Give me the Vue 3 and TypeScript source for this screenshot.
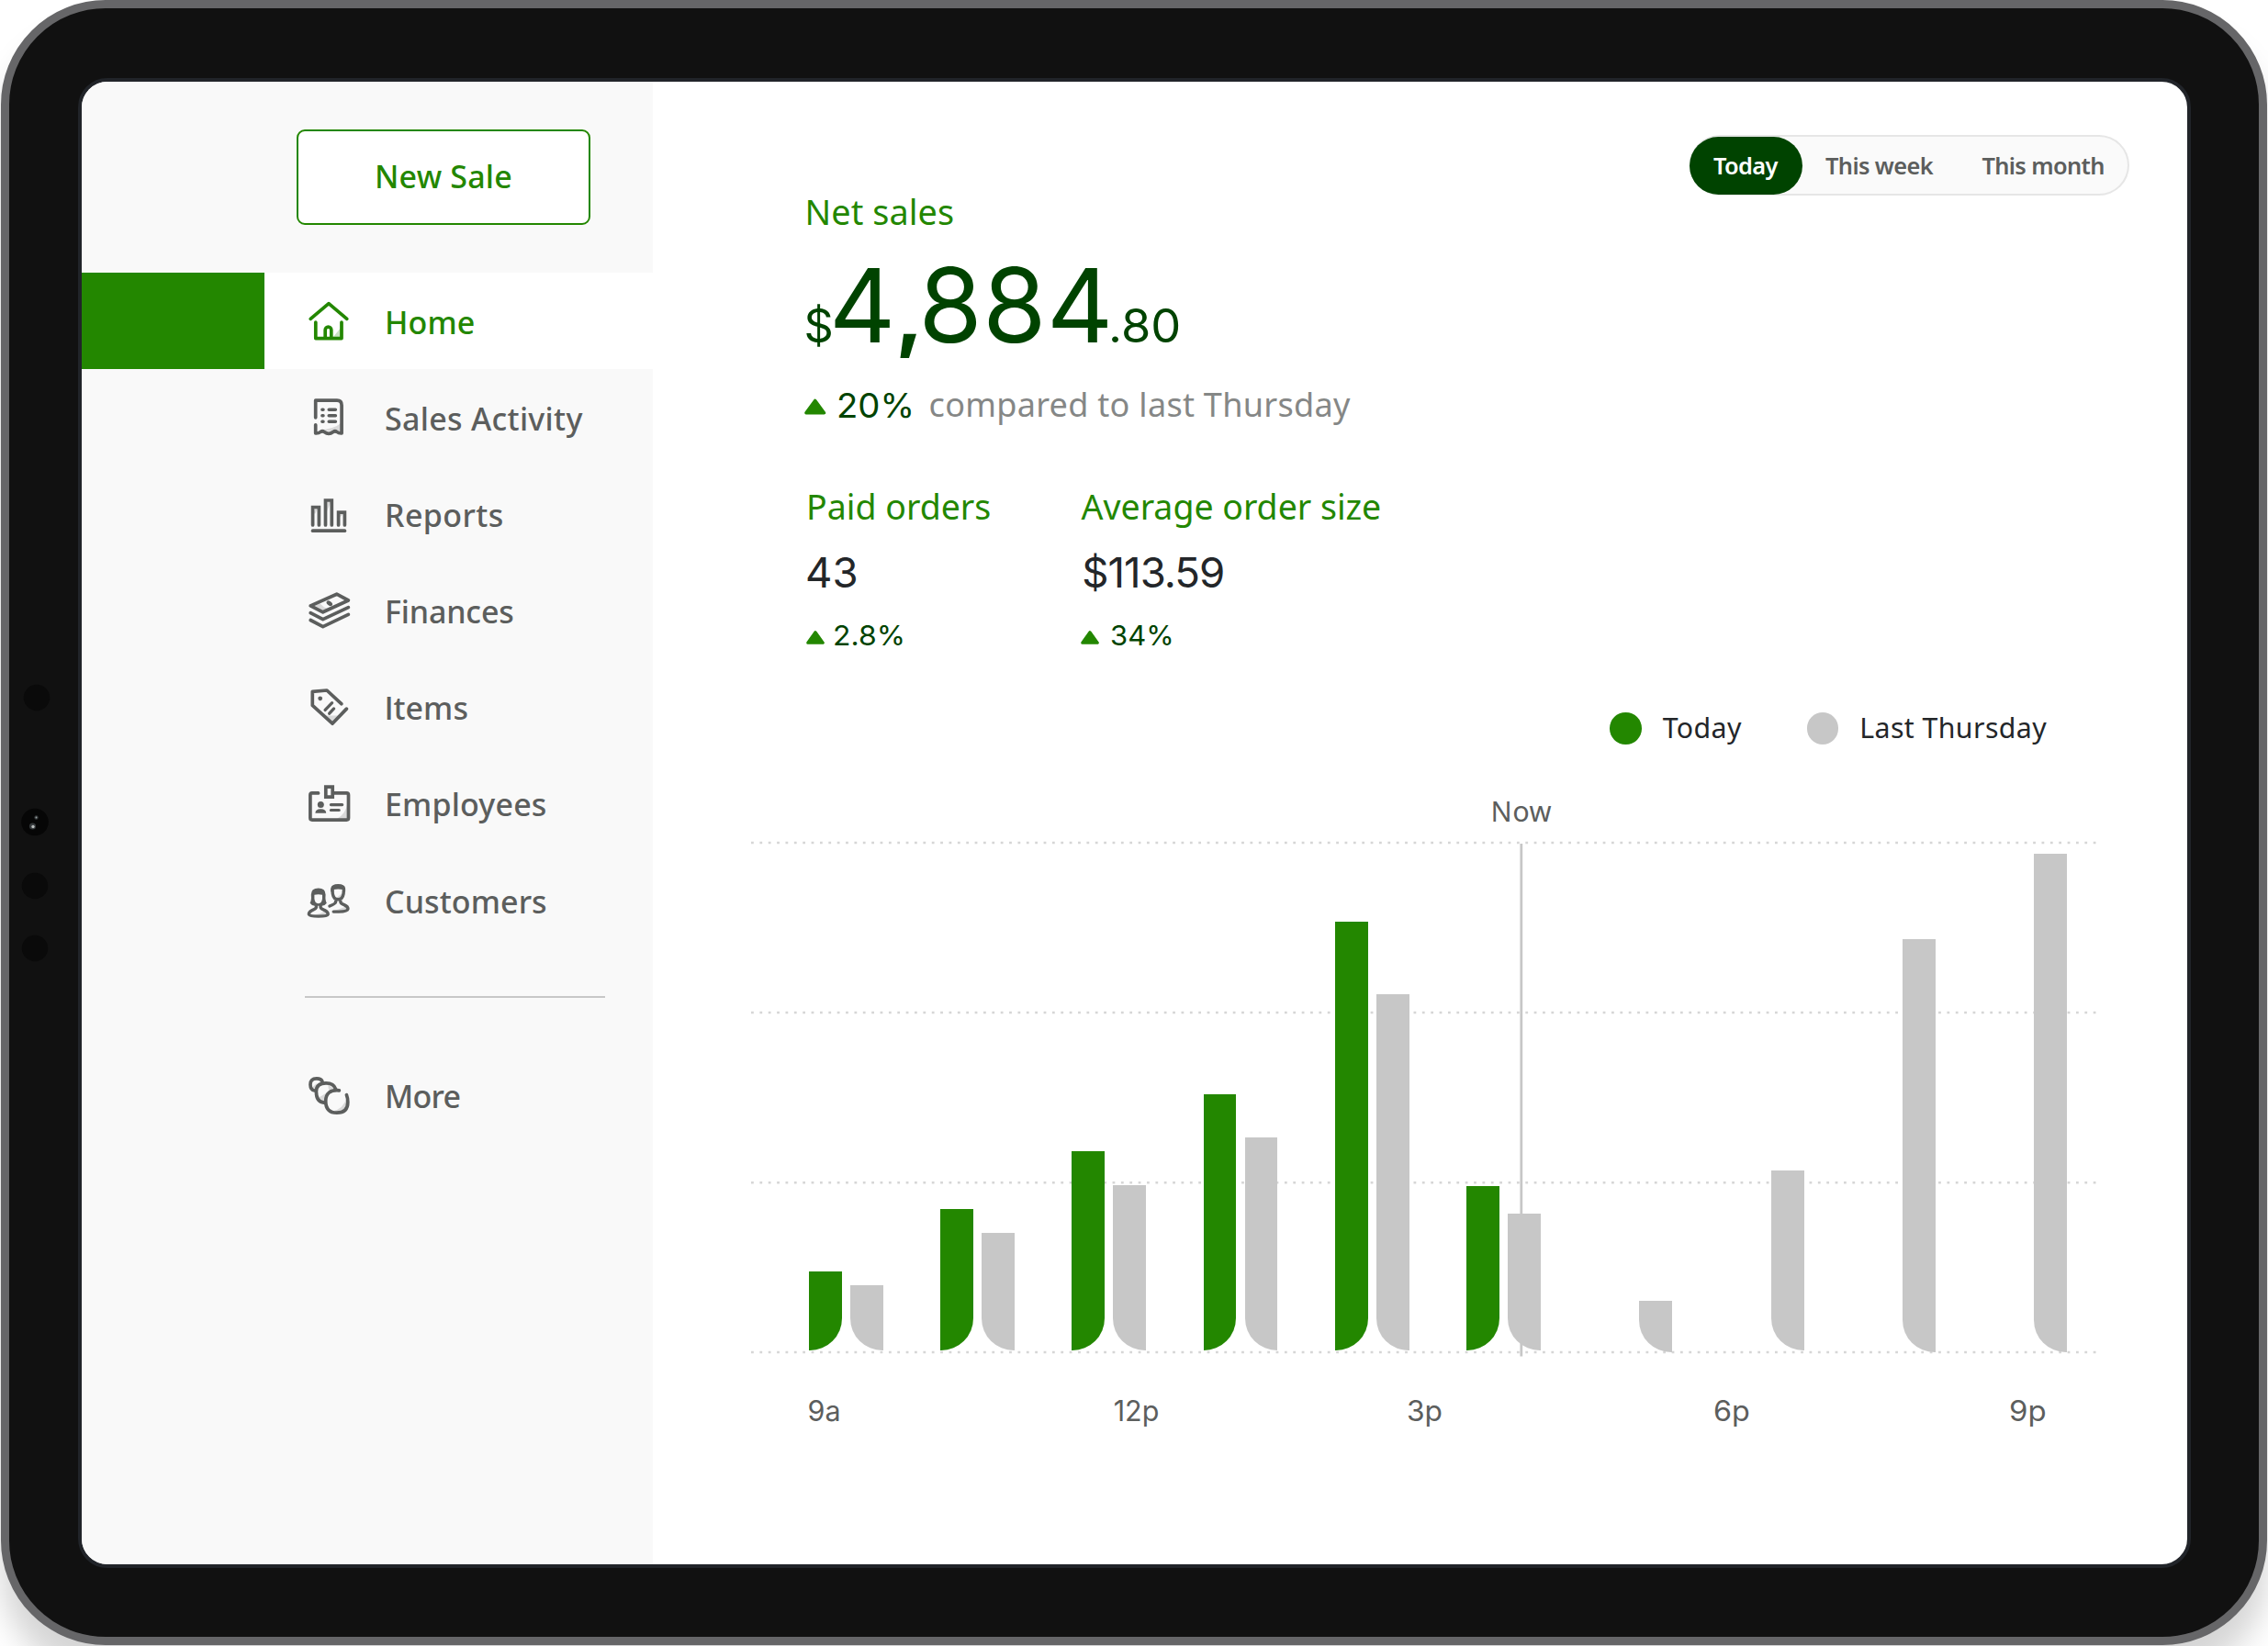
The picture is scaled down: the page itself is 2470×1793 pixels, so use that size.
<script setup lang="ts">
interface NavItem {
  id: string
  label: string
  tracking: number
}

interface Slot {
  today: number
  last: number
  drop?: number
}

const navItems: NavItem[] = [
  { id: 'home', label: 'Home', tracking: 0.1 },
  { id: 'sales', label: 'Sales Activity', tracking: 0.3 },
  { id: 'reports', label: 'Reports', tracking: 0.4 },
  { id: 'finances', label: 'Finances', tracking: -0.17 },
  { id: 'items', label: 'Items', tracking: 0.1 },
  { id: 'employees', label: 'Employees', tracking: 0.17 },
  { id: 'customers', label: 'Customers', tracking: 0.1 },
  { id: 'more', label: 'More', tracking: -0.7 },
]

const slots: Slot[] = [
  { today: 86, last: 71 },
  { today: 154.5, last: 128.5 },
  { today: 217.3, last: 180 },
  { today: 279.6, last: 232 },
  { today: 467.5, last: 388 },
  { today: 179.6, last: 149.3 },
  { today: 0, last: 56.3, drop: 2 },
  { today: 0, last: 196 },
  { today: 0, last: 450, drop: 2 },
  { today: 0, last: 543, drop: 2 },
]

const gridLines = [2, 187, 372.3, 557]

const hours = [
  { label: '9a', width: 333.2, stretch: 1 },
  { label: '12p', width: 319.1, stretch: 1 },
  { label: '3p', width: 334.1, stretch: 1.04 },
  { label: '6p', width: 321.8, stretch: 1.06 },
  { label: '9p', width: 80, stretch: 1.08 },
]
</script>

<template>
  <div class="page">
    <div class="device">
      <svg class="sensors" width="60" height="320" viewBox="0 0 60 320">
        <g fill="#0a0a0a">
          <circle cx="40" cy="20" r="14.2" />
          <circle cx="38" cy="155.5" r="14.8" fill="#060606" />
          <circle cx="38" cy="225" r="14.2" />
          <circle cx="38" cy="293" r="14.2" />
        </g>
        <circle cx="35.5" cy="160" r="3.6" fill="#34383a" />
        <circle cx="36" cy="160.5" r="1.7" fill="#b9bdbd" />
        <circle cx="39.5" cy="150.5" r="2.2" fill="#34383a" />
        <circle cx="39.5" cy="150.5" r="0.9" fill="#9aa3a3" />
      </svg>

      <div class="screen">
        <aside class="sidebar">
          <button class="new-sale">New Sale</button>
          <nav>
            <template v-for="item in navItems" :key="item.id">
              <hr v-if="item.id === 'more'" class="divider" />
              <a class="nav-item" :class="[item.id, { active: item.id === 'home' }]">
                <svg class="icon" width="60" height="60" viewBox="0 0 60 60" fill="none" stroke="currentColor"
                  stroke-width="3.7" stroke-linecap="round" stroke-linejoin="round">
                  <template v-if="item.id === 'home'">
                    <path class="shade" d="M34.5 47.5 44 36V47.5Z" />
                    <path d="M10.2 27.3 30 10.6 49.8 27.3" />
                    <path d="M15.8 31V48.6H44V31" />
                    <path d="M26.2 48V39.4A3.3 3.3 0 0 1 32.8 39.4V48" />
                  </template>
                  <template v-else-if="item.id === 'sales'">
                    <path class="shade" d="M19 43.5Q37 42 43 36V45.5Z" />
                    <path d="M15.7 29.8V11.2H39Q44.1 11.2 44.1 16.5V47Q41 47.2 38.8 45.4 36.8 44 34.8 45.6 30 49.2 25.2 45.6 23.2 44 21.2 45.4 19 47.2 15.7 47V37.8" />
                    <path stroke-width="3.5" d="M22.9 21.2H24M30.2 21.2H37.4M22.9 27.8H24M30.2 27.8H37.4M22.9 34.2H24M30.2 34.2H37.4" />
                  </template>
                  <template v-else-if="item.id === 'reports'">
                    <path class="shade" d="M13.5 28 15.5 23H18.5L15 30ZM28 27V16.5H32.5ZM41.5 34V29.5H46.5Z" />
                    <path stroke-linejoin="miter" d="M12.6 42V22.5H19.4V42M26.5 42V15H33.3V42M40.6 42V28.1H47.4V42" />
                    <path d="M12.6 48.2H47.4" />
                  </template>
                  <template v-else-if="item.id === 'finances'">
                    <path class="shade" d="M11 25 20 22 25 26.5 30 28 24 31Z" />
                    <path d="M10.2 24.9 38.7 12.2 51.4 19 23.7 31.8Z" />
                    <ellipse cx="30.8" cy="22.2" rx="3.6" ry="2.3" transform="rotate(38 30.8 22.2)" fill="currentColor" stroke="none" />
                    <path d="M10.2 32.6 23.7 39.7 51.4 26.6M10.2 40.5 23.7 47.6 51.4 34.4" />
                  </template>
                  <template v-else-if="item.id === 'items'">
                    <path class="shade" d="M25.5 39.4H42.2L34 47.5Z" />
                    <path d="M43.8 26.7 28 12 12.3 13.3V28.4L34 48.2 49.4 32.1" />
                    <circle cx="20.7" cy="20.8" r="2.4" fill="currentColor" stroke="none" />
                    <path stroke-width="3.3" d="M26.1 33.4 33.6 25.7M30.7 37.2 35.6 31.9" />
                  </template>
                  <template v-else-if="item.id === 'employees'">
                    <path class="shade" d="M38 47.5Q49 42 50.5 29V47.5Z" />
                    <path d="M18.6 18.9H11.9Q9.9 18.9 9.9 20.9V46.1Q9.9 48.1 11.9 48.1H49.5Q51.5 48.1 51.5 46.1V20.9Q51.5 18.9 49.5 18.9H35" />
                    <path stroke-linejoin="miter" d="M26.8 12.2H34.2V23.1H26.8Z" />
                    <circle cx="21.3" cy="31.6" r="3.5" fill="currentColor" stroke="none" />
                    <path fill="currentColor" stroke="none" d="M15.4 40.8Q15.4 36.2 21.3 36.2 27.2 36.2 27.2 40.8Z" />
                    <path stroke-width="3.2" d="M32.4 31.6H44.7M32.4 37.5H41.2" />
                  </template>
                  <template v-else-if="item.id === 'customers'">
                    <path class="shade" d="M12 45.5Q24 44 26 41L29 45 20 47ZM36 41 49 36.5 50 40ZM38 27.5 45.5 21 44 27Z" />
                    <path stroke-width="3.4" d="M34 18 34.3 22.5Q35.3 28.8 40.2 28.8 45.1 28.8 46.1 22.5L46.4 18M37.6 28.7V31.6Q37.4 33.4 31 36M42.9 28.7V31.6Q43 33.2 46.8 34.6 51 36.4 51 39 50.4 42.1 41 42.1H35.2" />
                    <path fill="currentColor" stroke="none" d="M32.3 20.5V16.5Q33 12 40.2 12 47.5 12 48.1 16.5V20.5L45 20V18Q40.2 17.2 35.4 18V20Z" />
                    <path fill="currentColor" stroke="none" fill-rule="evenodd" d="M9.6 32.8Q11.4 30 10.8 23.5 10.8 16.4 18.7 16.4 26.6 16.4 26.6 23.5 26 30 27.8 32.8 26 35.6 22.6 35.8H14.8Q11.4 35.6 9.6 32.8ZM14.4 23.8V28Q15 33.2 18.7 33.2 22.4 33.2 23 28V23.8Q18.7 22.6 14.4 23.8Z" />
                    <path stroke-width="3.4" d="M16.4 35V37.3Q16.2 38.8 12 40.6 8.2 42.6 8.4 45 9.2 47.1 18.8 47.1 28.6 47.1 29.2 45 29.4 42.6 25.6 40.6 21.3 38.8 21.1 37.3V35" />
                  </template>
                  <template v-else>
                    <path class="shade" d="M18.5 33 30 26 26 37ZM11.5 22 17 17 15.8 23.5ZM34 47.5Q46 45 49.5 33 52 47 40 48.5ZM29 18 36 23.5 30 24Z" />
                    <path d="M23 15Q21.6 11.8 16.8 11.9 9.8 12 10 18.5 10.1 24.4 14.6 25" />
                    <path d="M37.6 23.4Q35.6 16.8 27 16.8 16.4 16.8 16.4 26 16.4 37.4 24.8 38.2" />
                    <path d="M41.4 24.8Q26.7 23.6 26.7 36.5 26.7 49.2 38.8 49.2 50.8 49.2 50.8 37.5 50.8 33 49.4 29.6" />
                  </template>
                </svg>
                <span class="nav-label" :style="{ letterSpacing: item.tracking + 'px' }">{{ item.label }}</span>
              </a>
            </template>
          </nav>
        </aside>

        <main class="main">
          <header class="top">
            <section class="net">
              <h2 class="label net-label">Net sales</h2>
              <div class="amount">
                <span class="currency">$</span><span class="whole">4<span class="comma">,</span>884</span><span class="cents">.80</span>
              </div>
              <div class="change">
                <svg class="tri" width="24" height="18" viewBox="0 0 24 18"><path d="M11.7 2.2 21.6 15.8H1.8Z" /></svg>
                <span class="pct">20%</span>
                <span class="versus">compared to last Thursday</span>
              </div>
            </section>
            <div class="range">
              <span class="range-option selected">Today</span>
              <span class="range-option week">This week</span>
              <span class="range-option month">This month</span>
            </div>
          </header>

          <section class="stats">
            <div class="stat orders">
              <h3 class="label">Paid orders</h3>
              <p class="value">43</p>
              <p class="delta">
                <svg class="tri" width="20" height="15" viewBox="0 0 20 15"><path d="M10 1.8 18.2 13.2H1.8Z" /></svg>
                <span>2.8%</span>
              </p>
            </div>
            <div class="stat average">
              <h3 class="label">Average order size</h3>
              <p class="value">$113.59</p>
              <p class="delta">
                <svg class="tri" width="20" height="15" viewBox="0 0 20 15"><path d="M10 1.8 18.2 13.2H1.8Z" /></svg>
                <span>34%</span>
              </p>
            </div>
          </section>

          <div class="legend">
            <div class="legend-item"><i class="dot today"></i><span>Today</span></div>
            <div class="legend-item"><i class="dot last"></i><span>Last Thursday</span></div>
          </div>

          <div class="plot">
            <svg class="grid" width="1466" height="562" viewBox="0 0 1466 562">
              <line v-for="y in gridLines" :key="y" x1="0" x2="1466" :y1="y" :y2="y" stroke="#d6d6d6"
                stroke-width="2.6" stroke-dasharray="2.8 6.57" />
              <line x1="838.8" x2="838.8" y1="3" y2="561.5" stroke="#c7c7c7" stroke-width="2.8" />
            </svg>
            <span class="now">Now</span>
            <div class="bars">
              <div v-for="(slot, i) in slots" :key="i" class="slot">
                <div class="bar today" :style="{ height: slot.today + 'px' }"></div>
                <div class="bar last" :style="{ height: slot.last + 'px', marginBottom: -(slot.drop ?? 0) + 'px' }"></div>
              </div>
            </div>
          </div>

          <div class="hours">
            <span v-for="hour in hours" :key="hour.label"
              :style="{ width: hour.width + 'px', transform: `scaleX(${hour.stretch})` }">{{ hour.label }}</span>
          </div>
        </main>
      </div>
    </div>
  </div>
</template>

<style>
body {
  margin: 0;
  overflow: hidden;
  background: #fff;
}
</style>

<style scoped>
* {
  box-sizing: border-box;
}

h2, h3, p, hr {
  margin: 0;
  font-weight: 400;
}

.page {
  width: 2470px;
  height: 1793px;
  padding: 0 1px;
  overflow: hidden;
  font-family: "Noto Sans", sans-serif;
}

.device {
  position: relative;
  width: 2468px;
  height: 1792px;
  padding: 76px 74px 75px 75px;
  border: 9px solid #666668;
  border-radius: 114px;
  background: #111;
  box-shadow: 0 34px 34px rgba(0, 0, 0, 0.17);
}

.sensors {
  position: absolute;
  left: -10px;
  top: 731px;
}

.screen {
  display: flex;
  width: 2301px;
  height: 1623px;
  border: 4px solid #212429;
  border-radius: 32px;
  background: #fff;
  overflow: hidden;
}

.sidebar {
  flex: none;
  width: 622px;
  background: #f9f9f9;
}

.new-sale {
  display: block;
  width: 320px;
  height: 104px;
  margin: 51.5px 0 52.9px 234px;
  padding: 0 0 2px;
  border: 2px solid #238700;
  border-radius: 9px;
  background: #fff;
  color: #238700;
  font: 500 34px/98px "Noto Sans", sans-serif;
  letter-spacing: 0.2px;
}

.nav-item {
  display: flex;
  align-items: center;
  height: 105.1px;
  padding-left: 239px;
  color: #5c5e5d;
}

.nav-item.active {
  background: linear-gradient(to right, #238700 199px, #fff 199px);
  color: #238700;
}

.icon {
  flex: none;
  margin-right: 31px;
}

.shade {
  fill: #d9d9d9;
  stroke: none;
}

.active .shade {
  fill: #c9e2c3;
}

.nav-label {
  display: block;
  padding-top: 2px;
  font-size: 34px;
  font-weight: 500;
  line-height: 50px;
}

/* The capital I is drawn without serifs */
.items .nav-label::first-letter {
  font-family: Inter, sans-serif;
}

.divider {
  width: 327px;
  height: 2px;
  margin: 52.2px 0 53.5px 243px;
  border: 0;
  background: #c7c7c7;
}

.main {
  flex: 1;
}

.top {
  display: flex;
  justify-content: space-between;
  align-items: flex-start;
  padding: 0 63.2px 0 164.6px;
}

.label {
  color: #238700;
  font-size: 37.5px;
  line-height: 48px;
}

.net-label {
  margin-top: 117.6px;
  padding-left: 1px;
  font-size: 37.8px;
  letter-spacing: 0.05px;
}

.amount {
  display: flex;
  align-items: baseline;
  height: 100px;
  margin-top: 28px;
  color: #004300;
  font-family: Inter, sans-serif;
  font-size: 50.3px;
  line-height: 50px;
}

.currency {
  width: 27.4px;
}

.whole {
  width: 304.3px;
  font-size: 111.9px;
  line-height: 100px;
  letter-spacing: 0.56px;
  white-space: nowrap;
}

.comma {
  display: inline-block;
  width: 24.6px;
  font-size: 84px;
  font-weight: 800;
  line-height: 60px;
  text-align: center;
}

.cents,
.pct,
.delta span {
  display: block;
  transform-origin: left;
}

.cents {
  transform: scaleX(1.04);
}

.change {
  display: flex;
  height: 48px;
  margin-top: 33.4px;
  line-height: 48px;
}

.tri {
  flex: none;
  fill: #238700;
  stroke: #238700;
  stroke-width: 3.2;
  stroke-linejoin: round;
}

.change .tri {
  margin: 18px 11.6px 0 0;
}

.pct {
  width: 100.4px;
  margin-top: 2px;
  color: #004300;
  font-family: Inter, sans-serif;
  font-size: 36.3px;
  transform: scaleX(1.055);
}

.pct,
.versus {
  white-space: nowrap;
}

.versus {
  margin-top: 0.5px;
  color: #858786;
  font-size: 36.1px;
  letter-spacing: 0.26px;
}

.range {
  display: flex;
  align-items: center;
  width: 478.8px;
  height: 66px;
  margin-top: 58.3px;
  border-radius: 33px;
  background: #fafafa;
  box-shadow: inset 0 0 0 2px #e6e6e6;
  color: #5c5e5d;
  font-size: 25.4px;
  font-weight: 600;
  line-height: 62px;
  letter-spacing: -0.63px;
  white-space: nowrap;
}

.selected {
  width: 123px;
  height: 63px;
  padding-left: 25.9px;
  border-radius: 32px;
  background: #004300;
  color: #fff;
}

.week {
  width: 170.4px;
  margin-left: 25px;
}

.stats {
  display: flex;
  margin: 63.9px 0 0 166px;
}

.orders {
  width: 299.3px;
}

.orders .label {
  padding-left: 1px;
}

.average .label {
  padding-left: 1.3px;
  letter-spacing: -0.03px;
}

.value {
  margin-top: 20.5px;
  color: #232629;
  font-family: Inter, sans-serif;
  font-size: 45.6px;
  line-height: 56px;
}

.average .value {
  padding-left: 2px;
  letter-spacing: -1px;
}

.delta {
  display: flex;
  height: 40px;
  margin-top: 19.6px;
  color: #004300;
  font-family: Inter, sans-serif;
  font-size: 30.1px;
  line-height: 40px;
}

.delta .tri {
  margin: 15px 9.5px 0 0.6px;
}

.orders .delta span {
  transform: scaleX(1.06);
}

.average .delta span {
  transform: scaleX(1.03);
}

.average .delta .tri {
  margin-right: 12.4px;
}

.legend {
  display: flex;
  height: 40px;
  margin: 61.7px 0 0 1042.4px;
  color: #232629;
  font-size: 30.3px;
  line-height: 37px;
  letter-spacing: 0.4px;
}

.legend-item {
  display: flex;
  align-items: center;
}

.legend-item:first-child {
  width: 214.6px;
}

.legend-item span {
  padding-bottom: 2px;
}

.dot {
  width: 34.5px;
  height: 34.5px;
  margin-right: 22.8px;
  border-radius: 50%;
}

.dot.today,
.bar.today {
  background: #238700;
}

.dot.last,
.bar.last {
  background: #c7c7c7;
}

.plot {
  position: relative;
  width: 1466px;
  height: 557px;
  margin: 102.6px 0 0 106.8px;
}

.grid {
  position: absolute;
  left: 0;
  top: 0;
}

.now {
  position: absolute;
  left: 799px;
  top: -53.7px;
  width: 80px;
  color: #5c5e5d;
  font-size: 30.6px;
  line-height: 40px;
  letter-spacing: 0.5px;
  text-align: center;
}

.bars {
  position: relative;
  display: flex;
  height: 100%;
  padding: 0 0 2px 63px;
}

.slot {
  display: flex;
  flex: none;
  align-items: flex-end;
  gap: 9.1px;
  width: 143.28px;
}

.bar {
  width: 35.9px;
}

.bar.today {
  border-bottom-right-radius: 35px;
}

.bar.last {
  border-bottom-left-radius: 35px;
}

.hours {
  display: flex;
  margin: 43.3px 0 0 168.5px;
  color: #5c5e5d;
  font-family: Inter, sans-serif;
  font-size: 30.5px;
  line-height: 40px;
}

.hours span {
  transform-origin: left;
}
</style>
